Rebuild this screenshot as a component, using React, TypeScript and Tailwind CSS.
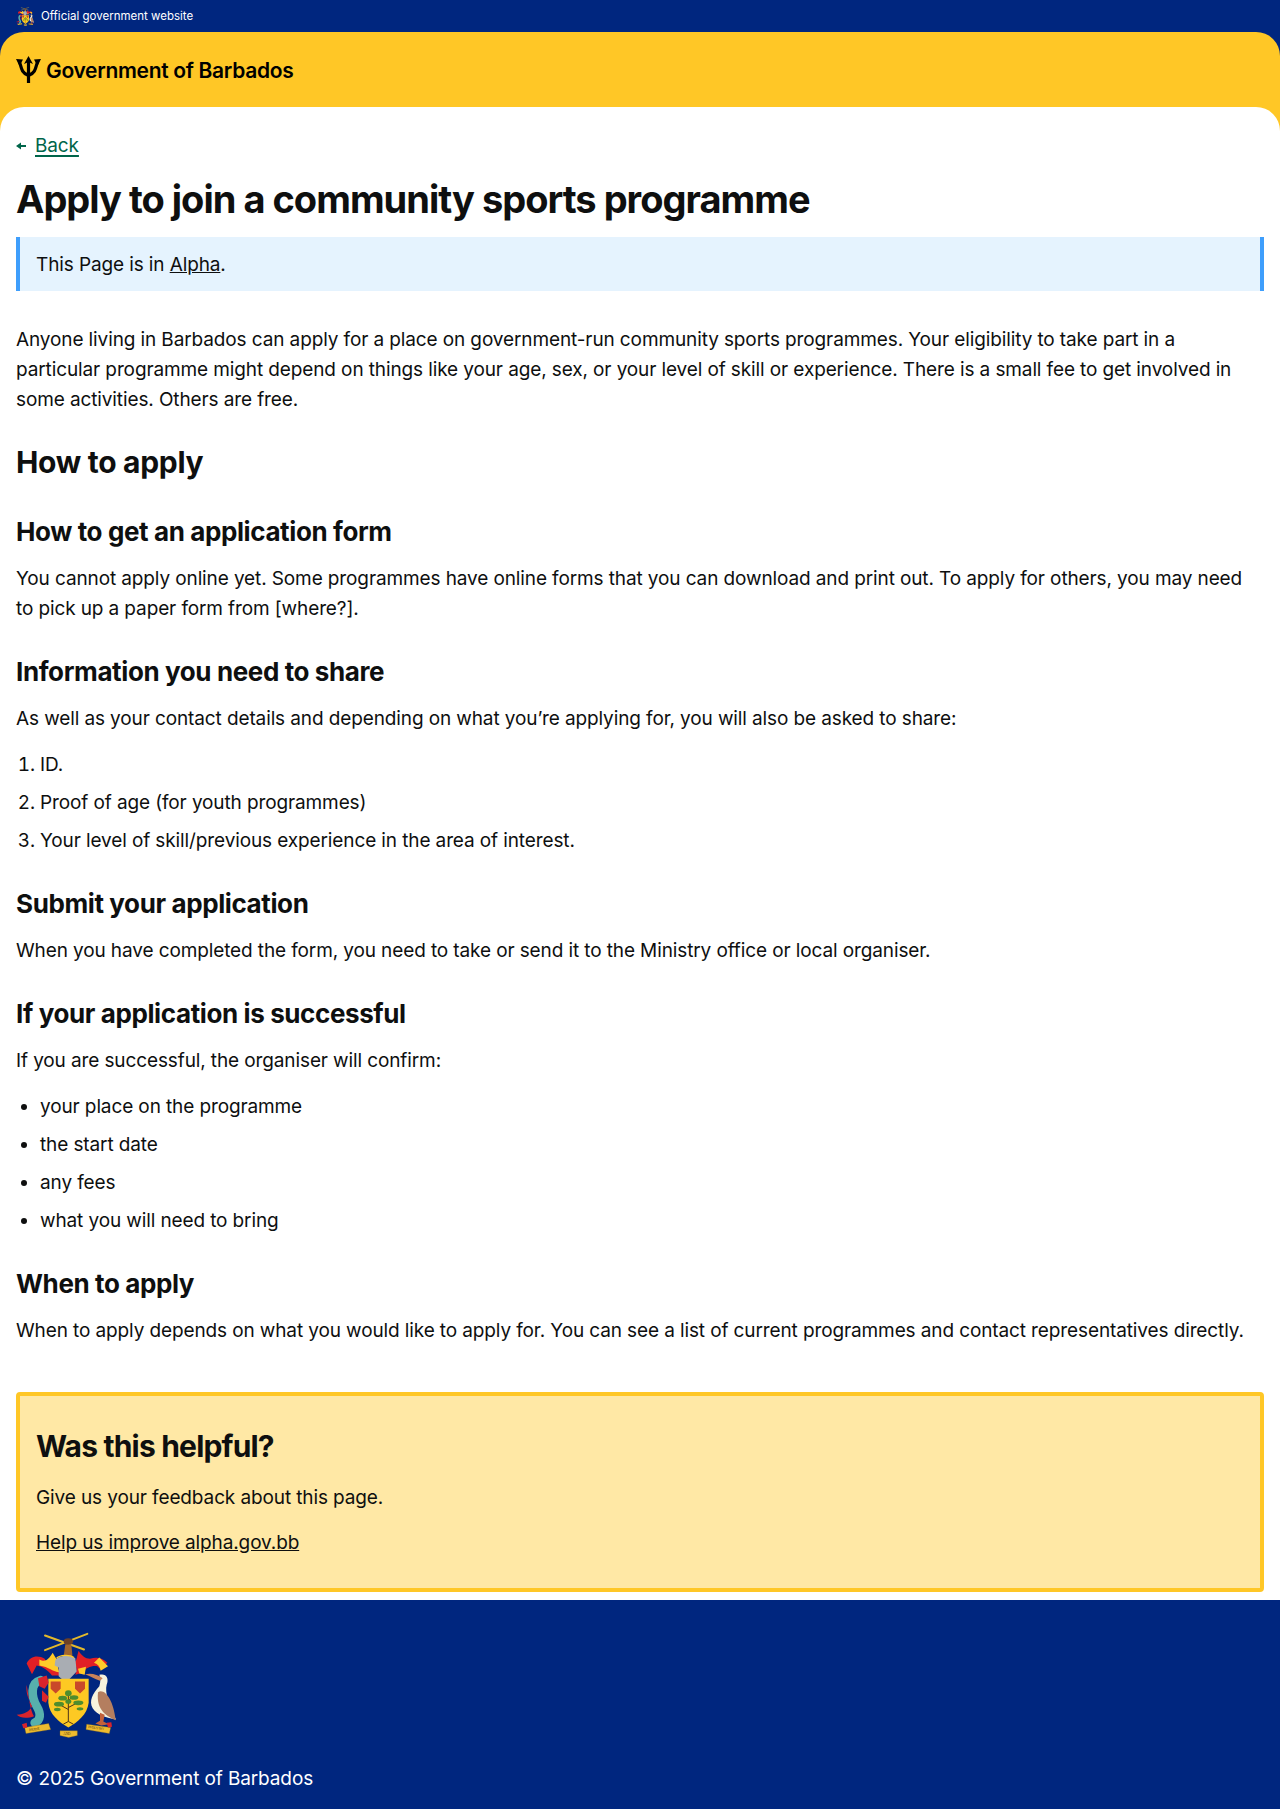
import React from "react";

const Crest = ({ className }: { className: string }) => (
  <svg viewBox="18 20 300 320" className={className} aria-hidden="true">
    {/* sugar canes and fist */}
    <path d="M105 30 L222 72 M105 74 L232 25" stroke="#e2b92c" strokeWidth="6" strokeLinecap="round" />
    <path d="M160 98 L166 56 L184 56 L188 98 Z" fill="#a0652f" />
    <ellipse cx="175" cy="48" rx="14" ry="10" fill="#6d4126" />
    {/* mantling */}
    <path d="M50 114 C60 90 86 88 104 100 L114 120 C134 122 148 124 150 150 L126 150 C114 134 96 122 80 120 L66 146 Z" fill="#e21f26" />
    <path d="M88 102 C106 112 116 102 128 82 C138 98 140 106 152 104 C144 116 142 124 148 140 C130 140 116 124 88 120 Z" fill="#ffcb29" />
    <path d="M292 112 C276 94 256 94 240 100 C226 100 214 90 206 76 C200 92 202 104 192 112 C200 122 202 132 196 148 L218 142 C228 126 244 120 262 122 L272 132 Z" fill="#e21f26" />
    <path d="M268 96 L294 122 L272 136 C270 124 264 116 252 112 Z M204 130 L228 124 L224 148 L208 144 Z" fill="#ffcb29" />
    {/* helmet */}
    <path d="M136 104 C146 90 178 86 196 98 L200 138 L168 172 L146 152 L146 126 L134 120 Z" fill="#a9adb3" />
    <path d="M140 98 C150 88 178 86 192 96" stroke="#ffcb29" strokeWidth="4" fill="none" />
    {/* shield */}
    <path d="M115 160 L236 160 L236 232 C232 266 204 290 175 306 C146 290 118 266 115 232 Z" fill="#fdc923" />
    <path d="M122 168 H152 V190 L137 204 L122 190 Z M195 168 H225 V190 L210 204 L195 190 Z" fill="#c9492a" />
    {/* tree */}
    <path d="M175 208 V288 M175 288 L160 296 M175 288 L190 296 M175 252 L150 238 M175 246 L202 232 M175 228 L160 218 M175 224 L190 214" stroke="#4e3418" strokeWidth="3" fill="none" />
    <g fill="#4f8d2d">
      <ellipse cx="175" cy="203" rx="10" ry="9" />
      <ellipse cx="158" cy="218" rx="13" ry="7" />
      <ellipse cx="192" cy="216" rx="13" ry="7" />
      <ellipse cx="147" cy="236" rx="15" ry="7" />
      <ellipse cx="205" cy="232" rx="15" ry="7" />
      <ellipse cx="142" cy="252" rx="10" ry="5" />
      <ellipse cx="210" cy="250" rx="10" ry="5" />
      <ellipse cx="175" cy="228" rx="9" ry="7" />
    </g>
    {/* dolphin */}
    <path d="M92 164 C60 172 64 214 80 242 C94 266 92 284 74 292" stroke="#57b0ad" strokeWidth="26" strokeLinecap="round" fill="none" />
    <path d="M50 178 C46 204 58 226 66 242 C58 258 44 266 20 268 C32 280 56 278 72 272 C62 256 58 230 50 178 Z" fill="#d9242c" />
    <path d="M84 158 L110 150 L116 172 L104 190 L88 182 Z M96 194 L116 214 L108 232 L96 226 Z" fill="#d9242c" />
    {/* pelican */}
    <path d="M268 148 C288 142 298 158 290 178 C284 200 296 240 318 282 C290 276 262 270 248 248 C236 226 248 204 268 182 C272 170 272 158 268 148 Z" fill="#f7f3dd" />
    <path d="M225 146 C244 142 262 146 278 158 L270 166 C254 160 240 152 225 146 Z" fill="#c9835a" />
    <path d="M264 200 C284 188 310 222 317 284 C292 272 258 256 264 200 Z" fill="#b47e5f" />
    <path d="M270 262 L284 268 L280 288 L296 296 L274 300 L256 294 L270 286 Z" fill="#c2603a" />
    {/* scrolls */}
    <path d="M44 306 L116 294 L122 312 L48 324 Z M150 316 H202 V330 L176 336 L150 330 Z M230 296 L302 306 L298 324 L228 312 Z" fill="#edbb2f" stroke="#8a6a1a" strokeWidth="1" />
    <path d="M36 296 L50 292 L52 306 L40 308 Z M290 292 L304 290 L306 304 L294 306 Z" fill="#d9242c" />
    <text x="58" y="317" fontSize="11" fill="#4a3510" fontFamily="Liberation Serif, serif" transform="rotate(-8 58 317)">PRIDE</text>
    <text x="160" y="329" fontSize="10" fill="#4a3510" fontFamily="Liberation Serif, serif">AND</text>
    <text x="234" y="307" fontSize="10" fill="#4a3510" fontFamily="Liberation Serif, serif" transform="rotate(8 234 307)">INDUSTRY</text>
  </svg>
);

const Trident = () => (
  <svg viewBox="0 0 25 27" className="w-[25px] h-[27px] shrink-0" aria-hidden="true">
    <path d="M12.5 4 V27" stroke="#000" strokeWidth="3.2" fill="none" />
    <path d="M12.5 0 L17 8 L12.5 6 L8 8 Z" fill="#000" />
    <path d="M3 5 C5.5 9 4 16.5 12.5 19.5 C21 16.5 19.5 9 22 5" stroke="#000" strokeWidth="3.2" fill="none" />
    <path d="M0 3 L7 3.5 L3.5 10 Z M25 3 L18 3.5 L21.5 10 Z" fill="#000" />
  </svg>
);

const H3 = ({ children }: { children: React.ReactNode }) => (
  <h3 className="mt-[31px] mb-[15px] text-[26px] leading-[34px] font-bold tracking-[-0.015em]">{children}</h3>
);

export default function App() {
  return (
    <div className="bg-white text-[19px] leading-[30px] text-[#0e0f0f] tracking-[-0.006em] font-['Inter',sans-serif]">
      <div className="h-8 bg-[#00267f] flex items-center gap-[7px] pl-4">
        <Crest className="w-[18px] h-[19px]" />
        <span className="text-[11.5px] leading-4 tracking-normal text-white">Official government website</span>
      </div>

      <div className="bg-[#00267f]">
        <div className="bg-[#ffc726] rounded-t-3xl pt-[24px] px-4 h-[98px] flex items-start gap-[5px]">
          <Trident />
          <span className="mt-px text-[21px] leading-[28px] font-semibold tracking-[-0.015em] text-black">Government of Barbados</span>
        </div>
      </div>

      <div className="bg-[#ffc726]">
        <main className="bg-white rounded-t-3xl -mt-[23px] relative pt-6 px-4 pb-2">
          <a href="#" className="flex items-center gap-[9px] w-fit text-[#00654a]">
            <svg viewBox="0 0 10 8" className="w-[10px] h-2 shrink-0" aria-hidden="true">
              <path d="M0 4 L5 0.5 V3 H10 V5 H5 V7.5 Z" fill="#00654a" />
            </svg>
            <span className="underline decoration-2 underline-offset-[3px]">Back</span>
          </a>

          <h1 className="mt-[14px] text-[38px] leading-[48px] font-bold tracking-[-0.026em]">Apply to join a community sports programme</h1>

          <div className="mt-[14px] h-[54px] flex items-center px-4 pt-0.5 bg-[#e5f3fe] border-x-4 border-[#3e9efc]">
            <p>This Page is in <a href="#" className="underline">Alpha</a>.</p>
          </div>

          <p className="mt-[34px]">
            Anyone living in Barbados can apply for a place on government-run community sports programmes. Your eligibility to take part in a particular programme might depend on things like your age, sex, or your level of skill or experience. There is a small fee to get involved in some activities. Others are free.
          </p>

          <h2 className="mt-[27px] mb-[33px] text-[30px] leading-[40px] font-bold tracking-[-0.01em]">How to apply</h2>

          <H3>How to get an application form</H3>
          <p>You cannot apply online yet. Some programmes have online forms that you can download and print out. To apply for others, you may need to pick up a paper form from [where?].</p>

          <H3>Information you need to share</H3>
          <p>As well as your contact details and depending on what you’re applying for, you will also be asked to share:</p>
          <ol className="mt-4 list-decimal pl-6 flex flex-col gap-2">
            <li>ID.</li>
            <li>Proof of age (for youth programmes)</li>
            <li>Your level of skill/previous experience in the area of interest.</li>
          </ol>

          <H3>Submit your application</H3>
          <p>When you have completed the form, you need to take or send it to the Ministry office or local organiser.</p>

          <H3>If your application is successful</H3>
          <p>If you are successful, the organiser will confirm:</p>
          <ul className="mt-4 list-disc pl-6 flex flex-col gap-2">
            <li>your place on the programme</li>
            <li>the start date</li>
            <li>any fees</li>
            <li>what you will need to bring</li>
          </ul>

          <H3>When to apply</H3>
          <p>When to apply depends on what you would like to apply for. You can see a list of current programmes and contact representatives directly.</p>

          <section className="mt-[46px] bg-[#ffe8a5] border-4 border-[#ffc726] rounded px-4 pt-[30px] pb-[30px]">
            <h2 className="text-[30px] leading-[40px] font-bold tracking-[-0.027em]">Was this helpful?</h2>
            <p className="mt-[17px]">Give us your feedback about this page.</p>
            <p className="mt-[15px]"><a href="#" className="underline">Help us improve alpha.gov.bb</a></p>
          </section>
        </main>
      </div>

      <footer className="bg-[#00267f] pt-8 px-4 pb-[15px] text-white">
        <Crest className="w-[100px] h-[107px]" />
        <p className="mt-[25px]">© 2025 Government of Barbados</p>
      </footer>
    </div>
  );
}
